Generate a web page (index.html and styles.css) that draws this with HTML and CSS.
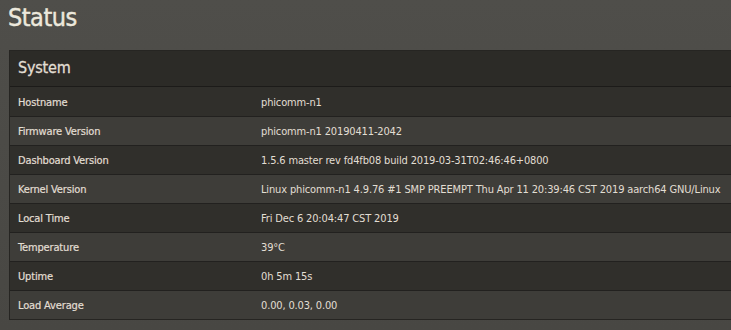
FILE: index.html
```html
<!DOCTYPE html>
<html lang="en">
<head>
    <meta charset="UTF-8" />
    <title>Status</title>
    <link rel="stylesheet" href="styles.css">
</head>
<body>
    <h1 class="page-title">Status</h1>
    <section class="panel">
        <h2 class="panel-title">System</h2>
        <table class="info">
            <tr>
                <td>Hostname</td>
                <td>phicomm-n1</td>
            </tr>
            <tr>
                <td>Firmware Version</td>
                <td>phicomm-n1 20190411-2042</td>
            </tr>
            <tr>
                <td>Dashboard Version</td>
                <td>1.5.6 master rev fd4fb08 build 2019-03-31T02:46:46+0800</td>
            </tr>
            <tr>
                <td>Kernel Version</td>
                <td>Linux phicomm-n1 4.9.76 #1 SMP PREEMPT Thu Apr 11 20:39:46 CST 2019 aarch64 GNU/Linux</td>
            </tr>
            <tr>
                <td>Local Time</td>
                <td>Fri Dec 6 20:04:47 CST 2019</td>
            </tr>
            <tr>
                <td>Temperature</td>
                <td>39°C</td>
            </tr>
            <tr>
                <td>Uptime</td>
                <td>0h 5m 15s</td>
            </tr>
            <tr>
                <td>Load Average</td>
                <td>0.00, 0.03, 0.00</td>
            </tr>
        </table>
    </section>
</body>
</html>
```

FILE: styles.css
```css
* {
    margin: 0;
    padding: 0;
    box-sizing: border-box;
}
body {
    width: 760px;
    min-height: 100vh;
    padding: 0 0 0 9px;
    background: linear-gradient(180deg, #4f4e4a, #484743);
    color: #e2ded3;
    font-family: "DejaVu Sans Condensed", "DejaVu Sans", sans-serif;
    overflow: hidden;
}
.page-title {
    height: 50px;
    margin-left: -1px;
    padding-top: 3px;
    font-size: 25px;
    font-weight: normal;
    letter-spacing: -0.5px;
    color: #ece8dc;
    -webkit-text-stroke: 0.4px #ece8dc;
}
.panel {
    background-color: #2c2b27;
    border: 1px solid #262522;
    border-right: none;
}
.panel-title {
    height: 36px;
    padding: 7px 0 0 8px;
    font-size: 16px;
    font-weight: normal;
    letter-spacing: -0.2px;
    -webkit-text-stroke: 0.3px #e2ded3;
    border-bottom: 1px solid #1c1b19;
}
.info {
    width: 100%;
    border-collapse: collapse;
    font-size: 11px;
    letter-spacing: -0.15px;
}
.info tr {
    height: 29px;
    background-color: #302f2b;
}
.info tr:nth-child(even) {
    background-color: #3e3d39;
}
.info td {
    padding: 2px 0 0 8px;
    border-bottom: 1px solid #22211f;
    white-space: nowrap;
}
.info tr:last-child td {
    border-bottom: none;
}
.info td:first-child {
    width: 243px;
    -webkit-text-stroke: 0.2px #e2ded3;
}
```
